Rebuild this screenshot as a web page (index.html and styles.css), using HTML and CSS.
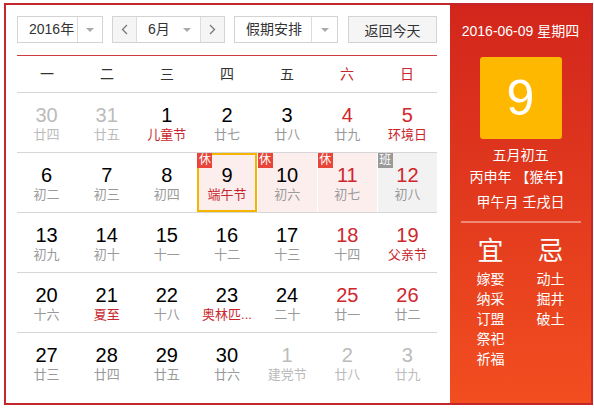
FILE: index.html
```html
<!DOCTYPE html>
<html lang="zh-CN">
<head>
<meta charset="utf-8">
<title>万年历</title>
<link rel="stylesheet" href="styles.css">
</head>
<body>
<div class="cal">
  <div class="main">
    <div class="toolbar">
      <div class="sel sel-year">
        <span class="sel-text">2016年</span>
        <span class="sel-arrow"><i class="tri"></i></span>
      </div>
      <div class="sel sel-month">
        <span class="step"><svg width="7" height="11" viewBox="0 0 7 11"><path d="M6 1 L1.5 5.5 L6 10" fill="none" stroke="#777" stroke-width="1.3"/></svg></span>
        <span class="month-mid"><span class="sel-text">6月</span><i class="tri"></i></span>
        <span class="step step-next"><svg width="7" height="11" viewBox="0 0 7 11"><path d="M1 1 L5.5 5.5 L1 10" fill="none" stroke="#777" stroke-width="1.3"/></svg></span>
      </div>
      <div class="sel sel-holiday">
        <span class="sel-text">假期安排</span>
        <span class="sel-arrow"><i class="tri"></i></span>
      </div>
      <button class="today-btn">返回今天</button>
    </div>

    <div class="week-head">
      <span>一</span><span>二</span><span>三</span><span>四</span><span>五</span><span class="wk">六</span><span class="wk">日</span>
    </div>

    <div class="row">
      <div class="cell other"><span class="num">30</span><span class="lunar">廿四</span></div>
      <div class="cell other"><span class="num">31</span><span class="lunar">廿五</span></div>
      <div class="cell"><span class="num">1</span><span class="lunar fest">儿童节</span></div>
      <div class="cell"><span class="num">2</span><span class="lunar">廿七</span></div>
      <div class="cell"><span class="num">3</span><span class="lunar">廿八</span></div>
      <div class="cell weekend"><span class="num">4</span><span class="lunar">廿九</span></div>
      <div class="cell weekend"><span class="num">5</span><span class="lunar fest">环境日</span></div>
    </div>
    <div class="row">
      <div class="cell"><span class="num">6</span><span class="lunar">初二</span></div>
      <div class="cell"><span class="num">7</span><span class="lunar">初三</span></div>
      <div class="cell"><span class="num">8</span><span class="lunar">初四</span></div>
      <div class="cell rest selected"><span class="badge">休</span><span class="num">9</span><span class="lunar fest">端午节</span></div>
      <div class="cell rest"><span class="badge">休</span><span class="num">10</span><span class="lunar">初六</span></div>
      <div class="cell rest weekend"><span class="badge">休</span><span class="num">11</span><span class="lunar">初七</span></div>
      <div class="cell work weekend"><span class="badge badge-work">班</span><span class="num">12</span><span class="lunar">初八</span></div>
    </div>
    <div class="row">
      <div class="cell"><span class="num">13</span><span class="lunar">初九</span></div>
      <div class="cell"><span class="num">14</span><span class="lunar">初十</span></div>
      <div class="cell"><span class="num">15</span><span class="lunar">十一</span></div>
      <div class="cell"><span class="num">16</span><span class="lunar">十二</span></div>
      <div class="cell"><span class="num">17</span><span class="lunar">十三</span></div>
      <div class="cell weekend"><span class="num">18</span><span class="lunar">十四</span></div>
      <div class="cell weekend"><span class="num">19</span><span class="lunar fest">父亲节</span></div>
    </div>
    <div class="row">
      <div class="cell"><span class="num">20</span><span class="lunar">十六</span></div>
      <div class="cell"><span class="num">21</span><span class="lunar fest">夏至</span></div>
      <div class="cell"><span class="num">22</span><span class="lunar">十八</span></div>
      <div class="cell"><span class="num">23</span><span class="lunar fest">奥林匹...</span></div>
      <div class="cell"><span class="num">24</span><span class="lunar">二十</span></div>
      <div class="cell weekend"><span class="num">25</span><span class="lunar">廿一</span></div>
      <div class="cell weekend"><span class="num">26</span><span class="lunar">廿二</span></div>
    </div>
    <div class="row last">
      <div class="cell"><span class="num">27</span><span class="lunar">廿三</span></div>
      <div class="cell"><span class="num">28</span><span class="lunar">廿四</span></div>
      <div class="cell"><span class="num">29</span><span class="lunar">廿五</span></div>
      <div class="cell"><span class="num">30</span><span class="lunar">廿六</span></div>
      <div class="cell other"><span class="num">1</span><span class="lunar">建党节</span></div>
      <div class="cell other"><span class="num">2</span><span class="lunar">廿八</span></div>
      <div class="cell other"><span class="num">3</span><span class="lunar">廿九</span></div>
    </div>
  </div>

  <div class="side">
    <div class="side-date">2016-06-09 星期四</div>
    <div class="big-day">9</div>
    <div class="side-line first">五月初五</div>
    <div class="side-line">丙申年 【猴年】</div>
    <div class="side-line gap">甲午月 壬戌日</div>
    <div class="side-sep"></div>
    <div class="yiji">
      <div class="yj-col">
        <div class="yj-title">宜</div>
        <div class="yj-item">嫁娶</div>
        <div class="yj-item">纳采</div>
        <div class="yj-item">订盟</div>
        <div class="yj-item">祭祀</div>
        <div class="yj-item">祈福</div>
      </div>
      <div class="yj-col">
        <div class="yj-title">忌</div>
        <div class="yj-item">动土</div>
        <div class="yj-item">掘井</div>
        <div class="yj-item">破土</div>
      </div>
    </div>
  </div>
</div>
</body>
</html>
```

FILE: styles.css
```css
* { box-sizing: border-box; }

body {
  margin: 0;
  background: #fff;
  font-family: "Liberation Sans", "Noto Sans CJK SC", sans-serif;
  color: #333;
}

.cal {
  margin: 3px 0 0 4px;
  width: 589px;
  height: 402px;
  border: 2px solid #c3272b;
  display: flex;
}

.main {
  width: 444px;
  padding: 11px 13px 0 11px;
}

/* toolbar */
.toolbar {
  display: flex;
  height: 27px;
  margin-bottom: 12px;
}

.sel {
  display: flex;
  height: 27px;
  border: 1px solid #d3d3d3;
  background: #fff;
  font-size: 14px;
  line-height: 25px;
  color: #333;
}

.sel-text { padding-left: 11px; }

.sel-year { width: 86px; }
.sel-year .sel-text { width: 59px; }

.sel-arrow {
  flex: 1;
  border-left: 1px solid #dcdcdc;
  display: flex;
  align-items: center;
  justify-content: center;
}

.tri {
  display: block;
  width: 0;
  height: 0;
  border-left: 4px solid transparent;
  border-right: 4px solid transparent;
  border-top: 4px solid #aaa;
}

.sel-month {
  width: 113px;
  margin-left: 9px;
}

.step {
  width: 24px;
  background: #f5f5f5;
  display: flex;
  align-items: center;
  justify-content: center;
  border-right: 1px solid #dcdcdc;
}

.step-next {
  border-right: none;
  border-left: 1px solid #dcdcdc;
}

.month-mid {
  flex: 1;
  display: flex;
  align-items: center;
  justify-content: space-between;
  padding-right: 9px;
}

.sel-holiday {
  width: 104px;
  margin-left: 9px;
}
.sel-holiday .sel-text { width: 76px; }

.today-btn {
  margin-left: 10px;
  width: 89px;
  height: 27px;
  border: 1px solid #d3d3d3;
  background: #f5f5f5;
  font-family: inherit;
  font-size: 14px;
  color: #333;
  padding: 0;
}

/* week header */
.week-head {
  display: grid;
  grid-template-columns: repeat(7, 1fr);
  height: 38px;
  border-top: 1px solid #cf3a3a;
  border-bottom: 1px solid #d6d6d6;
  font-size: 14px;
  line-height: 36px;
  text-align: center;
  color: #333;
}
.week-head .wk { color: #c8262c; }

/* rows */
.row {
  display: grid;
  grid-template-columns: repeat(7, 1fr);
  column-gap: 1px;
  height: 60px;
  border-bottom: 1px solid #d6d6d6;
}
.row.last { border-bottom: none; }

.cell {
  position: relative;
  display: flex;
  flex-direction: column;
  align-items: center;
  padding-top: 11px;
  height: 59px;
}

.num {
  font-size: 20px;
  line-height: 22px;
  color: #000;
}

.lunar {
  font-size: 13px;
  line-height: 18px;
  color: #999;
  white-space: nowrap;
}

.lunar.fest { color: #c8262c; }
.weekend .num { color: #d0262c; }

.other .num,
.other .lunar { color: #bbb; }

.rest { background: #fdeeee; }
.work { background: #f2f2f2; }

.selected {
  border: 2px solid #f5b400;
  padding-top: 9px;
}

.badge {
  position: absolute;
  top: 0;
  left: 0;
  width: 15px;
  height: 15px;
  background: #e8463a;
  color: #fff;
  font-size: 12px;
  line-height: 15px;
  text-align: center;
}
.selected .badge { top: -2px; left: -2px; }
.badge-work { background: #999; }

/* side panel */
.side {
  flex: 1;
  background: linear-gradient(#d2261c, #f24e20);
  color: #fff;
  text-align: center;
  padding-top: 16px;
  display: flex;
  flex-direction: column;
  align-items: center;
}

.side-date {
  font-size: 14px;
  line-height: 20px;
}

.big-day {
  margin-top: 16px;
  width: 82px;
  height: 82px;
  background: #ffb800;
  border-radius: 3px;
  font-size: 50px;
  line-height: 82px;
  color: #fff;
}

.side-line {
  font-size: 14px;
  line-height: 22px;
}
.side-line.first { margin-top: 5px; }
.side-line.gap { margin-top: 3px; }

.side-sep {
  margin-top: 8px;
  width: 120px;
  height: 2px;
  background: #f08a78;
}

.yiji {
  display: flex;
  margin-top: 13px;
}

.yj-col {
  width: 60px;
  display: flex;
  flex-direction: column;
  align-items: center;
}

.yj-title {
  font-size: 26px;
  line-height: 30px;
  margin-bottom: 3px;
}

.yj-item {
  font-size: 14px;
  line-height: 20px;
}
```
